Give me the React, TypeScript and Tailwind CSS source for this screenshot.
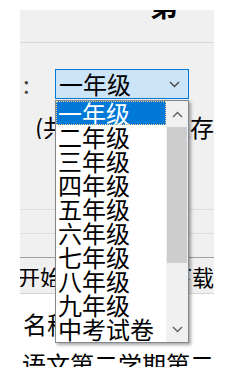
import React from "react";

const grades = [
  "一年级",
  "二年级",
  "三年级",
  "四年级",
  "五年级",
  "六年级",
  "七年级",
  "八年级",
  "九年级",
  "中考试卷",
];

function Chevron({ up = false, className = "" }: { up?: boolean; className?: string }) {
  return (
    <svg width="11" height="7" viewBox="0 0 11 7" className={className}>
      <path
        d={up ? "M1 6 L5.5 1.5 L10 6" : "M1 1 L5.5 5.5 L10 1"}
        fill="none"
        stroke="currentColor"
        strokeWidth="1.4"
      />
    </svg>
  );
}

function GradeList() {
  return (
    <div className="absolute left-[35px] top-[90px] w-[134px] h-[243px] flex border border-[#828790] bg-white text-[24px] shadow-[2px_2px_3px_rgba(0,0,0,0.35)]">
      <div className="flex-1 flex flex-col whitespace-nowrap overflow-hidden">
        {grades.map((g, i) => (
          <div
            key={g}
            className={
              i === 0
                ? "h-[24px] pl-[2px] leading-[24px] bg-[#0078d7] text-white outline outline-1 outline-dotted outline-[#f3d38c] -outline-offset-1"
                : "h-[24px] pl-[2px] leading-[24px] text-black"
            }
          >
            {g}
          </div>
        ))}
      </div>
      <div className="w-[22px] shrink-0 flex flex-col bg-[#f0f0f0] text-[#606060]">
        <div className="h-[26px] flex items-center justify-center">
          <Chevron up />
        </div>
        <div className="h-[136px] mx-[1px] bg-[#cdcdcd]" />
        <div className="flex-1" />
        <div className="h-[26px] flex items-center justify-center">
          <Chevron />
        </div>
      </div>
    </div>
  );
}

export default function App() {
  return (
    <div className="w-[237px] h-[387px] bg-white pt-[10px] pl-[20px] font-['Noto_Sans_CJK_SC',sans-serif] text-black">
      <div className="relative w-[194px] h-[357px] overflow-hidden bg-[#f0f0f0]">
        {/* title */}
        <div className="h-[33px] border-b border-[#d9d9d9] overflow-hidden">
          <div className="ml-[130px] -mt-[19px] text-[28px] leading-[28px] font-bold">第</div>
        </div>

        {/* grade picker */}
        <div className="h-[30px] mt-[26px] flex items-center">
          <span className="w-[35px] pl-[3px] text-[24px] leading-[24px] text-[#444]">:</span>
          <div className="w-[134px] h-[30px] flex items-center justify-between pl-[3px] pr-[8px] border border-[#0078d7] bg-[#cce4f7] text-[24px] leading-[24px]">
            <span>一年级</span>
            <Chevron className="text-[#444]" />
          </div>
        </div>

        <div className="mt-[16px] h-[24px] flex text-[24px] leading-[24px] whitespace-nowrap">
          <span className="ml-[15px] w-[143px] overflow-hidden">(共10套试卷，</span>
          <span>保存</span>
        </div>

        <div className="mt-[70px] h-[24px] border-t border-[#dcdcdc]" />
        <div className="h-[24px] border-t border-[#dcdcdc]" />

        {/* table header */}
        <div className="h-[37px] border-t border-[#a0a0a0] border-b border-b-[#d5d5d5] flex items-center text-[22px] leading-[22px] whitespace-nowrap">
          <span className="-ml-[2px] w-[158px] overflow-hidden">开始时间</span>
          <span>下载</span>
        </div>

        {/* table body */}
        <div className="bg-white h-[100px] pt-[18px] text-[24px] leading-[24px] whitespace-nowrap">
          <div className="pl-[3px]">名称</div>
          <div className="pl-[2px] mt-[16px]">语文第二学期第二</div>
        </div>

        <GradeList />
      </div>
    </div>
  );
}
